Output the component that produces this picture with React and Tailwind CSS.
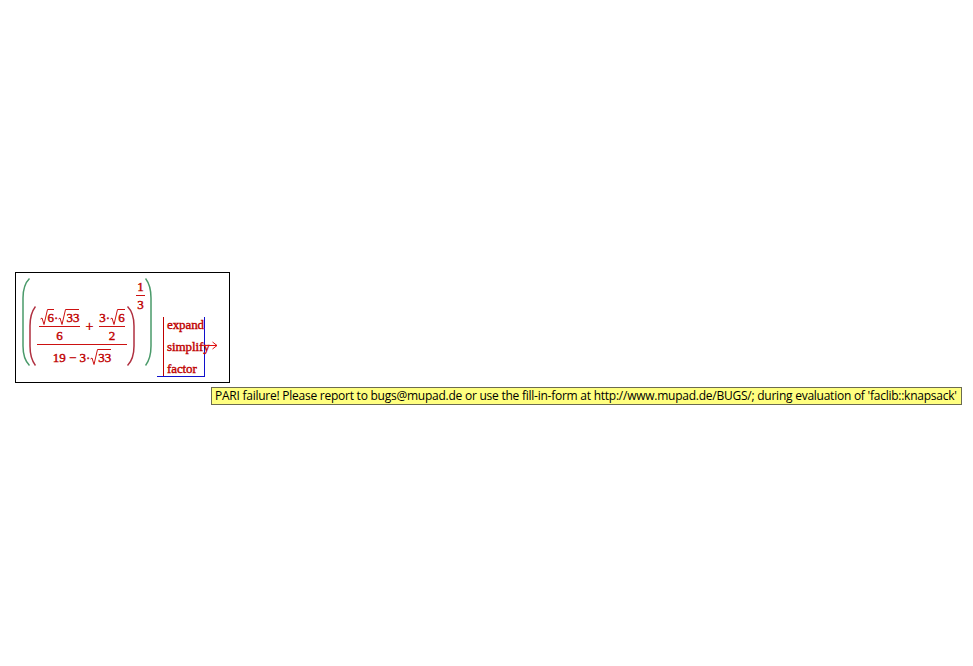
const serif = "font-['Liberation_Serif',serif]";

function Paren({ side, w, h, color, className = "" }) {
  const d =
    side === "l"
      ? `M${w - 0.5} 0.5 C3 5 1 11 1 20 V${h - 20} C1 ${h - 11} 3 ${h - 5} ${w - 0.5} ${h - 0.5}`
      : `M0.5 0.5 C${w - 3} 5 ${w - 1} 11 ${w - 1} 20 V${h - 20} C${w - 1} ${h - 11} ${w - 3} ${h - 5} 0.5 ${h - 0.5}`;
  return (
    <svg width={w} height={h} viewBox={`0 0 ${w} ${h}`} className={`shrink-0 block ${className}`} fill="none">
      <path d={d} stroke={color} strokeWidth="1.5" />
    </svg>
  );
}

function Root({ children }) {
  return (
    <span className="inline-flex items-start">
      <svg width="8" height="17" viewBox="0 0 8 17" fill="none" className="block shrink-0">
        <path d="M0.5 10 L2 9 L4 15.5 L7.5 0.5 L8 0.5" stroke="#cc1111" strokeWidth="1" />
      </svg>
      <span className="border-t border-[#cc1111] h-[17px] leading-[16px]">{children}</span>
    </span>
  );
}

function Frac({ num, den, barClass, numClass = "h-[17px]", denClass = "h-[18px]" }) {
  return (
    <div className="flex flex-col items-center">
      <div className={`flex items-end justify-center leading-[16px] ${numClass}`}>{num}</div>
      <div className={`h-px bg-[#cc1111] ${barClass}`} />
      <div className={`flex items-start justify-center leading-[18px] ${denClass}`}>{den}</div>
    </div>
  );
}

export default function App() {
  return (
    <div className="h-[666px] w-[973px] overflow-hidden bg-white pt-[272px] pl-[15px]">
      <div className={`flex h-[111px] w-[215px] items-start border border-black pl-[6px] text-[13px] text-[#c00000] [-webkit-text-stroke:0.4px_#c00000] ${serif}`}>
        <Paren side="l" w={8} h={88} color="#4a9a6a" className="mt-[5px]" />
        <Paren side="l" w={7} h={60} color="#b03040" className="mt-[33px] -ml-px" />
        <div className="mt-[33px] ml-px w-[90px]">
          <Frac
            barClass="w-[90px]"
            numClass="h-[38px]"
            denClass="h-[20px]"
            num={
              <div className="flex w-[90px] items-center pl-[2px] -mb-px">
                <Frac
                  barClass="w-[41px]"
                  numClass="h-[17px]"
                  num={
                    <div className="flex">
                      <Root>6</Root>
                      <span className="leading-[17px]">·</span>
                      <Root>33</Root>
                    </div>
                  }
                  den="6"
                />
                <span className="w-[19px] text-center text-[14px]">+</span>
                <Frac
                  barClass="w-[26px]"
                  numClass="h-[17px]"
                  num={
                    <div className="flex">
                      <span className="leading-[17px]">3·</span>
                      <Root>6</Root>
                    </div>
                  }
                  den="2"
                />
              </div>
            }
            den={
              <div className="flex pt-[4px]">
                <span className="leading-[18px] whitespace-pre">19 − 3·</span>
                <Root>33</Root>
              </div>
            }
          />
        </div>
        <Paren side="r" w={8} h={60} color="#b03040" className="mt-[33px]" />
        <div className="mt-[4px] ml-px w-[9px]">
          <Frac barClass="w-[9px]" numClass="h-[18px]" denClass="h-[18px]" num="1" den="3" />
        </div>
        <Paren side="r" w={7} h={88} color="#4a9a6a" className="mt-[5px]" />
        <div className="relative mt-[44px] ml-[5px] h-[60px] w-[48px] shrink-0 border-r border-b border-[#1010cc] text-[13px] tracking-[-0.1px]">
          <div className="ml-[6px] flex h-[59px] flex-col justify-between border-l border-[#c00000] pl-[3px] leading-[15px]">
            <span>expand</span>
            <span>simplify</span>
            <span>factor</span>
          </div>
          <svg width="14" height="9" viewBox="0 0 14 9" fill="none" className="absolute left-[47px] top-[24px]">
            <path d="M0 4.5 H13 M8.5 1 L13 4.5 L8.5 8" stroke="#e01010" strokeWidth="1" />
          </svg>
        </div>
      </div>
      <div className="ml-[196px] mt-[4px] flex h-[18px] w-[751px] items-center whitespace-nowrap border border-[#6b6b50] bg-[#ffff80] pl-[3px] font-['Open_Sans',sans-serif] text-[12px] tracking-[-0.245px] text-black">
        PARI failure! Please report to bugs@mupad.de or use the fill-in-form at http://www.mupad.de/BUGS/; during evaluation of 'faclib::knapsack'
      </div>
    </div>
  );
}
